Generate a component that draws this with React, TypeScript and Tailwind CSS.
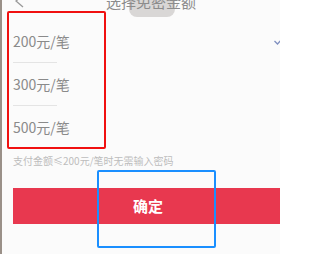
import React from "react";

const font = { fontFamily: '"Noto Sans CJK SC", "Noto Sans", sans-serif' };

function Row({ label, checked }: { label: string; checked?: boolean }) {
  return (
    <div className="flex h-[42px] items-center justify-between pl-[13px]">
      <span className="text-[14px] leading-none text-[#8a8a8a]">{label}</span>
      {checked && (
        <svg width="12" height="10" viewBox="0 0 12 10" className="mr-[-5px]">
          <path d="M1.5 5 L4.5 8 L10.5 1.5" fill="none" stroke="#7f8fc0" strokeWidth="1.3" />
        </svg>
      )}
    </div>
  );
}

export default function App() {
  return (
    <div className="relative h-[254px] w-[280px] overflow-hidden bg-[#fbfbfb]" style={font}>
      <div className="absolute left-0 top-0 h-full w-[1.5px] bg-[#9a9088]" />
      {/* header */}
      <div className="relative flex h-[20px] items-start">
        <svg width="14" height="12" viewBox="0 0 14 12" className="absolute left-[13px] top-[-4px]">
          <path d="M9 0 L3 5 L10 11" fill="none" stroke="#9a9a9a" strokeWidth="1.3" />
        </svg>
        <div className="absolute left-[129px] top-[-6px] h-[23px] w-[46px] rounded-[8px] bg-[#d9d7d6]" />
        <div className="relative mt-[-8px] w-full pl-[106px] text-[15px] leading-[20px] text-[#8c8c8c]">
          选择免密金额
        </div>
      </div>
      {/* list */}
      <div className="flex flex-col">
        <Row label="200元/笔" checked />
        <div className="ml-[13px] h-px w-[44px] bg-[#e4e4e4]" />
        <Row label="300元/笔" />
        <div className="ml-[13px] h-px w-[44px] bg-[#e4e4e4]" />
        <Row label="500元/笔" />
      </div>
      <div className="mt-[6px] pl-[13px] text-[10px] leading-[14px] text-[#bdbdbd]">
        支付金额≤200元/笔时无需输入密码
      </div>
      <div className="ml-[13px] mt-[20px] flex h-[36px] w-[270px] items-center justify-center bg-[#e8384f]">
        <span className="text-[15px] font-bold text-white">确定</span>
      </div>
      {/* annotations */}
      <div className="absolute left-[7px] top-[11px] h-[138px] w-[99px] rounded-[2px] border-2 border-[#f01010]" />
      <div className="absolute left-[97px] top-[170px] h-[78px] w-[119px] rounded-[2px] border-2 border-[#1a8fff]" />
    </div>
  );
}
